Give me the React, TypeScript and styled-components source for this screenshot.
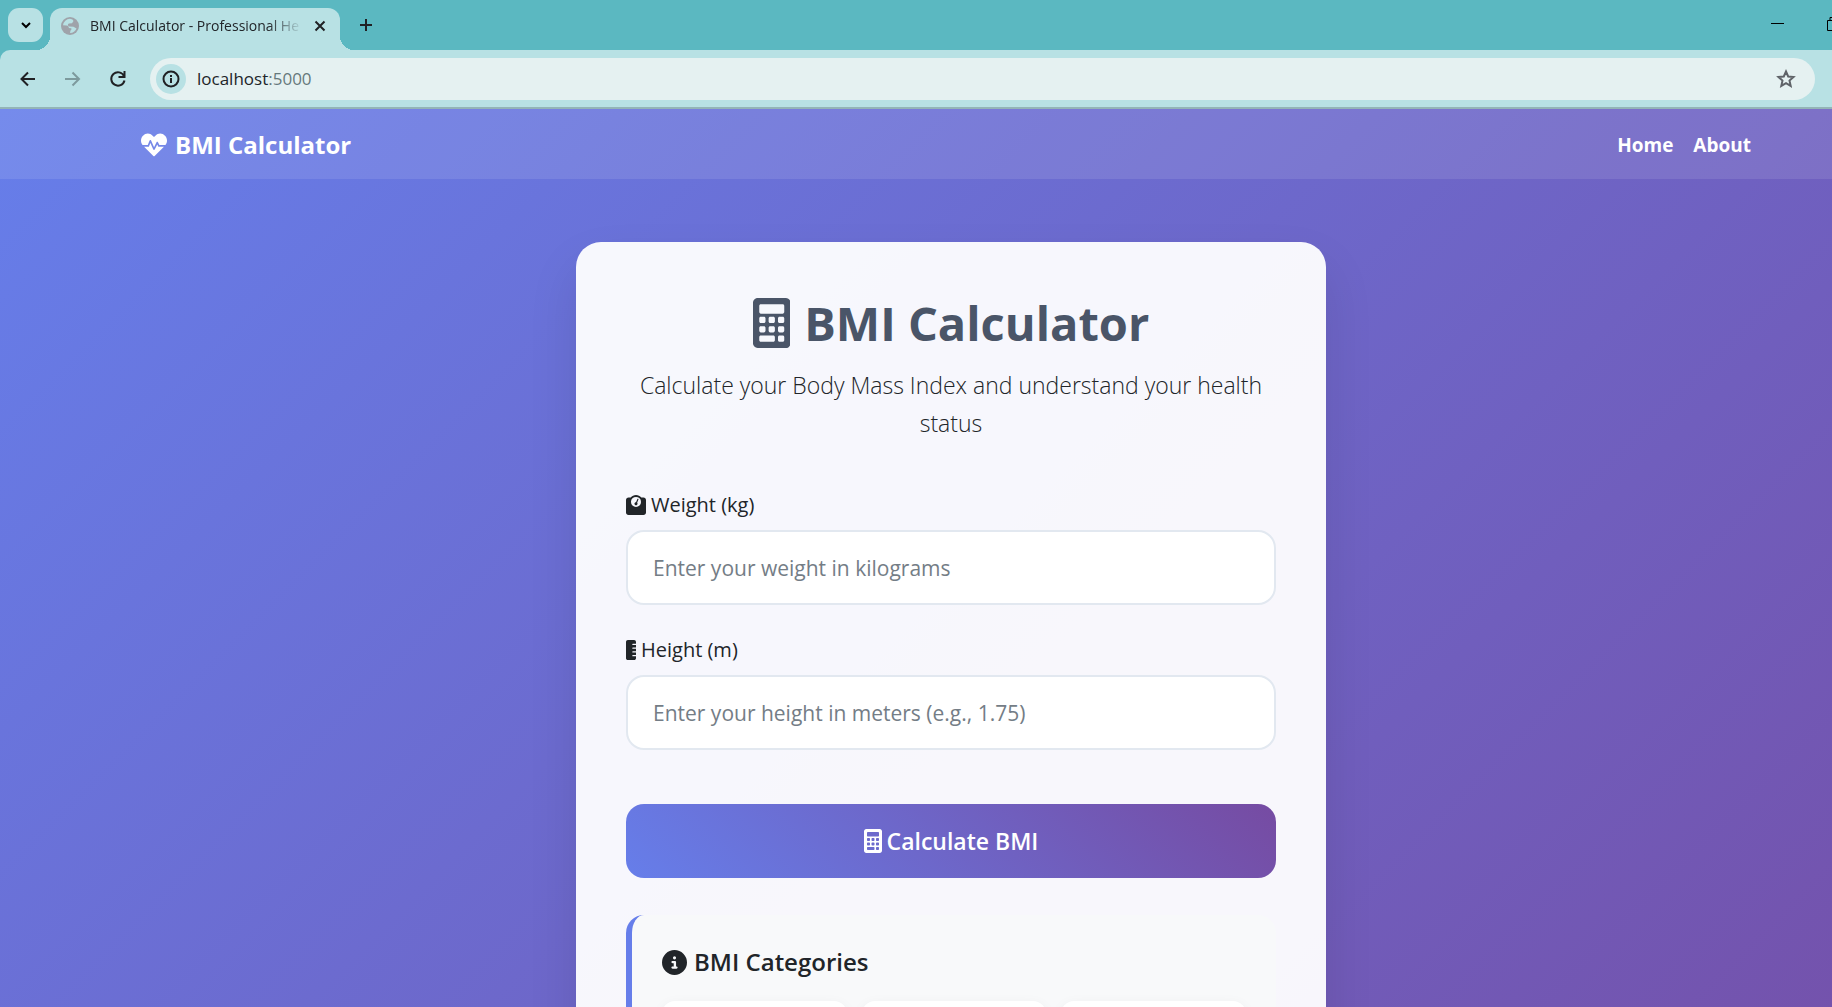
import React from "react";
import styled, { createGlobalStyle } from "styled-components";
import { FaHeartbeat } from "react-icons/fa";
import { FaCircleInfo, FaRulerVertical, FaWeightScale } from "react-icons/fa6";

const uiFont = '"Segoe UI", "Open Sans", "Noto Sans", sans-serif';

const GlobalStyle = createGlobalStyle`
  *, *::before, *::after { box-sizing: border-box; }
  html, body, #root { height: 100%; }
  body { margin: 0; overflow: hidden; font-family: ${uiFont}; color: #212529; }
  button, input { font: inherit; }
`;

const Window = styled.div`
  display: flex;
  flex-direction: column;
  height: 100vh;
  /* the window runs past the right edge of the screen */
  width: calc(100% + 70px);
  background: #5bb8c1;
`;

const TabStrip = styled.header`
  display: flex;
  align-items: flex-start;
  flex: none;
  height: 50px;
  padding: 8px 52px 0 8px;
`;

const TabSearch = styled.button`
  display: grid;
  place-items: center;
  width: 35px;
  height: 34px;
  padding: 0;
  border: 0;
  border-radius: 11px;
  background: #b8e1e4;
`;

const Tab = styled.div`
  position: relative;
  display: flex;
  align-items: center;
  width: 290px;
  height: 42px;
  margin-left: 7px;
  padding: 0 12px 6px 11px;
  border-radius: 12px 12px 0 0;
  background: #b8e1e4;
  &::before, &::after {
    content: "";
    position: absolute;
    bottom: 0;
    width: 14px;
    height: 14px;
  }
  &::before { right: 100%; background: radial-gradient(circle at 0 0, transparent 14px, #b8e1e4 14px); }
  &::after { left: 100%; background: radial-gradient(circle at 100% 0, transparent 14px, #b8e1e4 14px); }
`;

const TabTitle = styled.span`
  flex: 1;
  margin: 0 10px 0 11px;
  white-space: nowrap;
  font-size: 14px;
  line-height: 20px;
  mask-image: linear-gradient(to right, #000 84%, transparent);
`;

const IconButton = styled.button<{ $size: number; $color?: string }>`
  display: grid;
  place-items: center;
  flex: none;
  width: ${(p) => p.$size}px;
  height: ${(p) => p.$size}px;
  padding: 0;
  border: 0;
  background: none;
  color: ${(p) => p.$color ?? "#202124"};
`;

const NewTab = styled(IconButton)`
  margin: 0 auto 0 9px;
`;

const WindowButtons = styled.div`
  display: flex;
  gap: 24px;
  height: 32px;
`;

const Toolbar = styled.div`
  display: flex;
  align-items: center;
  flex: none;
  gap: 9px;
  height: 59px;
  padding: 1px 87px 0 10px;
  border-bottom: 2px solid #93b4b7;
  border-top-left-radius: 10px;
  background: #b8e1e4;
`;

const AddressBar = styled.div`
  display: flex;
  align-items: center;
  flex: 1;
  height: 42px;
  margin-left: 5px;
  padding: 0 12px 0 6px;
  border-radius: 21px;
  background: #e5f1f1;
`;

const SiteInfo = styled(IconButton)`
  border-radius: 50%;
  background: #b8e1e4;
`;

const Address = styled.div`
  flex: 1;
  margin-left: 11px;
  font-size: 17px;
  line-height: 24px;
  span { color: #66797c; }
`;

const Viewport = styled.div`
  flex: 1;
  min-height: 0;
  overflow: hidden;
`;

const Page = styled.div`
  min-height: 145%;
  background: linear-gradient(135deg, #667eea 0%, #764ba2 100%);
`;

const NavBar = styled.nav`
  background: rgba(255, 255, 255, 0.1);
`;

const NavInner = styled.div`
  display: flex;
  align-items: center;
  justify-content: space-between;
  max-width: 1650px;
  height: 70px;
  margin: 0 auto;
  padding: 2px 15px 0;
`;

const Brand = styled.a`
  display: flex;
  align-items: center;
  gap: 8px;
  color: #fff;
  font-size: 24px;
  font-weight: 700;
  line-height: 38px;
  text-decoration: none;
`;

const NavLinks = styled.div`
  display: flex;
`;

const NavLink = styled.a`
  padding: 10px;
  color: #fff;
  font-size: 19px;
  font-weight: 700;
  line-height: 30px;
  text-decoration: none;
`;

const Card = styled.main`
  max-width: 750px;
  margin: 63px auto;
  padding: 50px;
  border-radius: 25px;
  background: rgba(255, 255, 255, 0.95);
  box-shadow: 0 25px 50px rgba(0, 0, 0, 0.1);
`;

const Title = styled.h1`
  display: flex;
  align-items: center;
  justify-content: center;
  gap: 14px;
  margin: 0 0 12px;
  color: #4a5568;
  font-size: 47px;
  font-weight: 700;
  line-height: 62px;
`;

const Lead = styled.p`
  margin: 0 0 48px;
  font-size: 23px;
  font-weight: 300;
  line-height: 38px;
  text-align: center;
`;

const Field = styled.div`
  margin-bottom: 30px;
`;

const Label = styled.label`
  display: flex;
  align-items: center;
  gap: 5px;
  margin-bottom: 10px;
  font-size: 20px;
  line-height: 30px;
`;

const RulerIcon = styled(FaRulerVertical)`
  width: 10px;
  height: 20px;
`;

const TextInput = styled.input`
  display: block;
  width: 100%;
  height: 75px;
  padding: 0 25px;
  border: 2px solid #e2e8f0;
  border-radius: 18px;
  background: #fff;
  font-size: 21px;
  &::placeholder { color: #747d86; opacity: 1; }
`;

const Submit = styled.button`
  display: flex;
  align-items: center;
  justify-content: center;
  gap: 5px;
  width: 100%;
  height: 74px;
  margin: 54px 0 37px;
  border: 0;
  border-radius: 18px;
  background: linear-gradient(45deg, #667eea, #764ba2);
  color: #fff;
  font-size: 23px;
  font-weight: 600;
`;

const Categories = styled.section`
  padding: 30px;
  border-left: 6px solid #667eea;
  border-radius: 18px;
  background: #f8f9fa;
`;

const SectionTitle = styled.h2`
  display: flex;
  align-items: center;
  gap: 7px;
  margin: 0 0 22px;
  font-size: 24px;
  font-weight: 600;
  line-height: 34px;
`;

const CategoryGrid = styled.div`
  display: grid;
  grid-template-columns: repeat(3, 1fr);
  gap: 15px;
`;

const CategoryCard = styled.div`
  height: 100px;
  border-radius: 13px;
  background: #fff;
  box-shadow: 0 3px 13px rgba(0, 0, 0, 0.05);
`;

const Calculator = ({ size }: { size: number }) => (
  <svg width={size * 0.75} height={size} viewBox="0 0 384 512" fill="currentColor" fillRule="evenodd" aria-hidden="true">
    <path d="M336 0H48C22 0 0 22 0 48v416c0 26 22 48 48 48h288c26 0 48-22 48-48V48c0-26-22-48-48-48zM80 64h224c9 0 16 7 16 16v64c0 9-7 16-16 16H80c-9 0-16-7-16-16V80c0-9 7-16 16-16zM80 192h32c9 0 16 7 16 16v32c0 9-7 16-16 16H80c-9 0-16-7-16-16v-32c0-9 7-16 16-16zM176 192h32c9 0 16 7 16 16v32c0 9-7 16-16 16h-32c-9 0-16-7-16-16v-32c0-9 7-16 16-16zM272 192h32c9 0 16 7 16 16v32c0 9-7 16-16 16h-32c-9 0-16-7-16-16v-32c0-9 7-16 16-16zM80 288h32c9 0 16 7 16 16v32c0 9-7 16-16 16H80c-9 0-16-7-16-16v-32c0-9 7-16 16-16zM176 288h32c9 0 16 7 16 16v32c0 9-7 16-16 16h-32c-9 0-16-7-16-16v-32c0-9 7-16 16-16zM272 288h32c9 0 16 7 16 16v32c0 9-7 16-16 16h-32c-9 0-16-7-16-16v-32c0-9 7-16 16-16zM80 384h128c9 0 16 7 16 16v32c0 9-7 16-16 16H80c-9 0-16-7-16-16v-32c0-9 7-16 16-16zM272 384h32c9 0 16 7 16 16v32c0 9-7 16-16 16h-32c-9 0-16-7-16-16v-32c0-9 7-16 16-16z" />
  </svg>
);

const Stroke = ({ size, d, width = 2 }: { size: number; d: string; width?: number }) => (
  <svg width={size} height={size} viewBox={`0 0 ${size} ${size}`} fill="none" stroke="currentColor" strokeWidth={width} aria-hidden="true">
    <path d={d} />
  </svg>
);

export default function App() {
  return (
    <Window>
      <GlobalStyle />
      <TabStrip>
        <TabSearch aria-label="Search tabs">
          <Stroke size={16} d="M4 6l4 4 4-4" />
        </TabSearch>
        <Tab>
          <svg width="18" height="18" viewBox="0 0 18 18" aria-hidden="true">
            <circle cx="9" cy="9" r="9" fill="#9fa3aa" />
            <path d="M9 1.800A7.200 7.200 0 0 0 2 8.200L5.500 8.600C7.500 8.800 8 10 7.800 11L10 11.200C10.800 11.400 10.500 13 9.500 13.500L9 16C12 16 14.500 14 15.500 11.500L12.500 9.800 8.500 9.500C6.500 9 6.500 7 8 6.500L11 6.200 12.500 4 11.500 2.400z" fill="#b8e1e4" />
          </svg>
          <TabTitle>BMI Calculator - Professional He</TabTitle>
          <IconButton $size={16} aria-label="Close tab"><Stroke size={16} d="M3.500 3.500l9 9M12.500 3.500l-9 9" /></IconButton>
        </Tab>
        <NewTab $size={34} aria-label="New tab"><Stroke size={16} d="M8 2v12M2 8h12" /></NewTab>
        <WindowButtons>
          <IconButton $size={32} $color="#000" aria-label="Minimize"><Stroke size={14} width={1} d="M0 6.500h13" /></IconButton>
          <IconButton $size={32} $color="#000" aria-label="Restore"><Stroke size={14} width={1} d="M.5 3.500h10v10H.5zM3 3.500v-3h10.500v10h-3" /></IconButton>
        </WindowButtons>
      </TabStrip>
      <Toolbar>
        <IconButton $size={36} aria-label="Back"><Stroke size={18} d="M16 9H2.500M9 2.500L2.500 9l6.500 6.500" /></IconButton>
        <IconButton $size={36} $color="#7d9a9d" aria-label="Forward"><Stroke size={18} d="M1 9h14M8.500 2.500l6.500 6.500-6.500 6.500" /></IconButton>
        <IconButton $size={36} aria-label="Reload"><Stroke size={18} d="M15 6A6.700 6.700 0 1 0 15.500 10.500M15.500 1v6h-6" /></IconButton>
        <AddressBar>
          <SiteInfo $size={30} aria-label="Site information">
            <Stroke size={18} d="M9 1.500a7.500 7.500 0 1 0 0 15 7.500 7.500 0 0 0 0-15zM9 8v5M9 5v2" />
          </SiteInfo>
          <Address>localhost<span>:5000</span></Address>
          <IconButton $size={34} $color="#5f6368" aria-label="Bookmark"><Stroke size={20} d="M10 2.500l2.200 5 5.300.5-4 3.600 1.200 5.300L10 14.100l-4.700 2.800 1.200-5.300-4-3.600 5.300-.5z" /></IconButton>
        </AddressBar>
      </Toolbar>
      <Viewport>
        <Page>
          <NavBar>
            <NavInner>
              <Brand href="#"><FaHeartbeat size={26} />BMI Calculator</Brand>
              <NavLinks>
                <NavLink href="#">Home</NavLink>
                <NavLink href="#about">About</NavLink>
              </NavLinks>
            </NavInner>
          </NavBar>
          <Card>
            <Title><Calculator size={50} />BMI Calculator</Title>
            <Lead>Calculate your Body Mass Index and understand your health status</Lead>
            <Field>
              <Label htmlFor="weight"><FaWeightScale size={20} />Weight (kg)</Label>
              <TextInput id="weight" placeholder="Enter your weight in kilograms" />
            </Field>
            <Field>
              <Label htmlFor="height"><RulerIcon />Height (m)</Label>
              <TextInput id="height" placeholder="Enter your height in meters (e.g., 1.75)" />
            </Field>
            <Submit type="button"><Calculator size={24} />Calculate BMI</Submit>
            <Categories>
              <SectionTitle><FaCircleInfo size={25} />BMI Categories</SectionTitle>
              <CategoryGrid><CategoryCard /><CategoryCard /><CategoryCard /></CategoryGrid>
            </Categories>
          </Card>
        </Page>
      </Viewport>
    </Window>
  );
}
